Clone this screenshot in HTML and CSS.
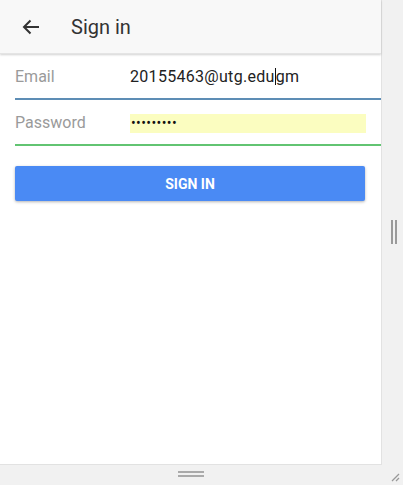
FILE: index.html
```html
<!DOCTYPE html>
<html>
<head>
<meta charset="utf-8">
<link rel="stylesheet" href="styles.css">
</head>
<body>
<div class="window">
  <div class="main">
    <div class="panel">
      <header class="header">
        <svg class="back" width="18" height="16" viewBox="0 0 18 16"><path d="M17 8H2M8.5 1.5L2 8l6.5 6.5" fill="none" stroke="#333" stroke-width="2"/></svg>
        <span class="title">Sign in</span>
      </header>
      <div class="form">
        <div class="row email">
          <span class="label">Email</span>
          <span class="value">20155463@utg.edu<span class="caret"></span>gm</span>
        </div>
        <div class="row password">
          <span class="label">Password</span>
          <span class="value filled">•••••••••</span>
        </div>
        <button class="btn">SIGN IN</button>
      </div>
    </div>
    <div class="side">
      <div class="vhandle"></div>
    </div>
  </div>
  <div class="bottom">
    <div class="hhandle"></div>
    <svg class="grip" width="12" height="12" viewBox="0 0 12 12"><path d="M11 4L4 11M11 8L8 11" stroke="#999" stroke-width="1.3"/></svg>
  </div>
</div>
</body>
</html>
```
FILE: styles.css
```css
html, body { margin: 0; padding: 0; }
body { background: #f1f1f1; font-family: Roboto, "Noto Sans", sans-serif; width: 403px; height: 485px; overflow: hidden; }
.window { display: flex; flex-direction: column; height: 485px; }
.main { display: flex; height: 465px; }
.panel { width: 381px; background: #fff; border-right: 1px solid #e2e2e2; border-bottom: 1px solid #e2e2e2; box-sizing: content-box; height: 464px; }
.header { height: 54px; background: #f8f8f8; display: flex; align-items: center; box-shadow: 0 1px 2px rgba(0,0,0,0.18); border-bottom: 1px solid #e4e4e4; box-sizing: border-box; position: relative; }
.back { margin-left: 22px; margin-top: 1px; }
.title { margin-left: 31px; font-size: 20px; color: #333; margin-top: 1px; }
.form { padding: 0 0 0 15px; }
.row { display: flex; align-items: center; font-size: 16px; }
.row.email { height: 43px; border-bottom: 2px solid #5d8db5; padding-top: 1px; }
.row.password { height: 44px; border-bottom: 2px solid #62c472; }
.label { width: 115px; color: #9a9a9a; }
.value { color: #222; letter-spacing: 0.3px; }
.caret { display: inline-block; width: 1px; height: 17px; background: #111; vertical-align: -3px; }
.filled { background: #fbfdc0; width: 235px; height: 19px; line-height: 19px; font-size: 14px; letter-spacing: 0.4px; color: #111; margin-top: 2px; padding-left: 1px; }
.btn { display: block; margin-top: 20px; width: 350px; height: 35px; border: none; border-radius: 2px; background: #4a8af4; color: #fff; font-family: Roboto, sans-serif; font-weight: 700; font-size: 14px; box-shadow: 0 1px 3px rgba(0,0,0,0.3); padding: 0; }
.side { flex: 1; display: flex; align-items: flex-start; justify-content: center; }
.vhandle { margin-top: 220px; width: 2px; height: 24px; border-left: 2px solid #9a9a9a; border-right: 2px solid #9a9a9a; margin-left: 2px; }
.bottom { height: 20px; position: relative; display: flex; align-items: center; }
.hhandle { margin-left: 178px; width: 26px; height: 2px; border-top: 2px solid #aaa; border-bottom: 2px solid #aaa; margin-top: -3px; }
.grip { position: absolute; right: 3px; bottom: 3px; }
```
